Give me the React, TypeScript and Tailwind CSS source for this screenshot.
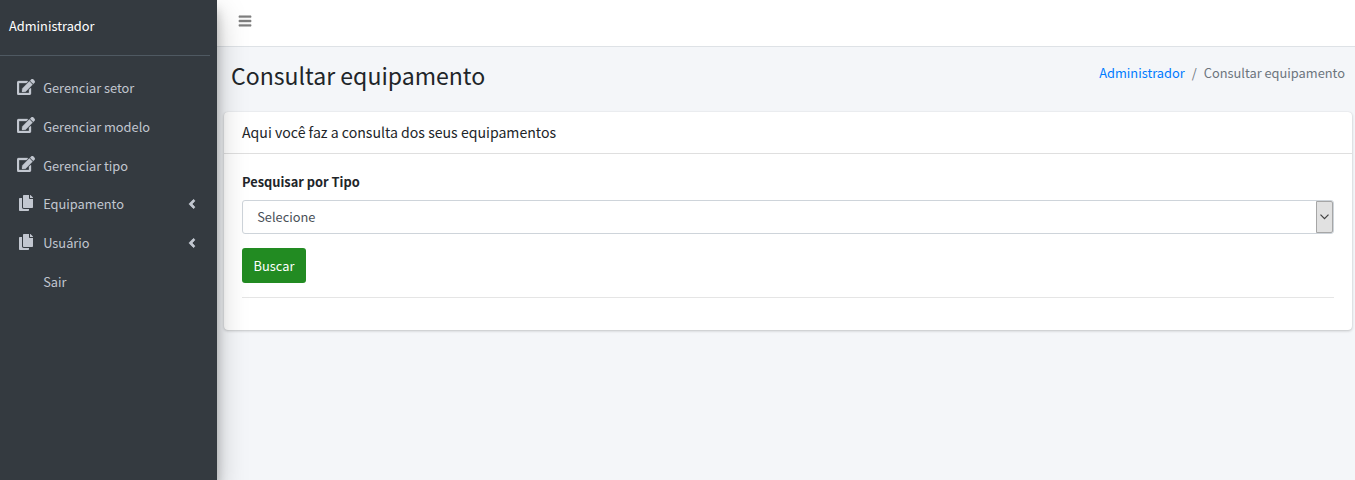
import { FaAngleLeft, FaBars, FaCopy, FaEdit } from "react-icons/fa";

const items = [
  { label: "Gerenciar setor", icon: "edit" },
  { label: "Gerenciar modelo", icon: "edit" },
  { label: "Gerenciar tipo", icon: "edit" },
  { label: "Equipamento", icon: "copy", tree: true },
  { label: "Usuário", icon: "copy", tree: true },
  { label: "Sair", icon: "" },
];

function Sidebar() {
  return (
    <aside className="relative z-10 h-[480px] w-[217px] shrink-0 bg-[#343a40] shadow-[0_14px_28px_rgba(0,0,0,0.25),0_10px_10px_rgba(0,0,0,0.22)]">
      <div className="mr-[7px] h-14 border-b border-[#4f5962] pt-[15px] pl-[9px] leading-[21px] text-white">
        Administrador
      </div>
      <nav className="flex flex-col pt-[12.2px]">
        {items.map((item) => (
          <a key={item.label} href="#" className="flex h-[38.75px] items-center pl-[15px] text-[#c2c7d0]">
            <span className="flex w-[22px] justify-center pb-[2px]">
              {item.icon === "edit" && <FaEdit className="h-4 w-[18px] stroke-current stroke-[10px]" />}
              {item.icon === "copy" && <FaCopy className="mr-px size-4" />}
            </span>
            <span className="ml-[6.2px] flex-1">{item.label}</span>
            {item.tree && <FaAngleLeft className="mr-[18px] size-[14px] stroke-current stroke-[28px]" />}
          </a>
        ))}
      </nav>
    </aside>
  );
}

export default function App() {
  return (
    <div className="flex h-[480px] overflow-hidden bg-[#f4f6f9] font-['Noto_Sans_CJK_SC',sans-serif] text-[12.82px] leading-[21px] text-[#212529]">
      <Sidebar />
      <div className="flex min-w-0 flex-1 flex-col">
        <header className="h-[47px] border-b border-[#dee2e6] bg-white pt-3.5 pl-[21px]">
          <FaBars className="size-[14px] stroke-current stroke-[16px] text-[#7f7f7f]" />
        </header>
        <div className="flex h-[65px] justify-between pt-3 pr-2.5 pl-3.5">
          <h1 className="text-[23.07px] leading-[32px]">Consultar equipamento</h1>
          <nav className="flex h-[27px] items-center gap-[7px] text-[#6c757d]">
            <a href="#" className="text-[#007bff]">Administrador</a>
            <span>/</span>
            <span>Consultar equipamento</span>
          </nav>
        </div>
        <main className="mr-[3px] ml-[7px] h-[218px] rounded-[4px] bg-white shadow-[0_0_1px_rgba(0,0,0,0.125),0_1px_3px_rgba(0,0,0,0.2)]">
          <h3 className="flex h-[42px] items-center border-b border-[#dfdfdf] pl-[18px] text-[14.12px]">
            Aqui você faz a consulta dos seus equipamentos
          </h3>
          <div className="pt-[17px] pr-[18px] pl-[18px]">
            <label className="block h-[29px] font-bold">Pesquisar por Tipo</label>
            <div className="flex h-[34px] items-stretch justify-between rounded-[3px] border border-[#ced4da] text-[#495057]">
              <span className="flex items-center pb-0.5 pl-[14.2px]">Selecione</span>
              <span className="flex w-[17px] items-center justify-center rounded-r-[2px] border border-[#a6a6a6] bg-[#e1e1e1]">
                <svg viewBox="0 0 9 6" className="h-[6px] w-[9px]" fill="none" stroke="#404040" strokeWidth="1.2">
                  <path d="M.5.7 4.5 4.7 8.5.7" />
                </svg>
              </span>
            </div>
            <button className="mt-3.5 flex h-[35px] w-16 items-center justify-center rounded-[3px] bg-[#228b22] text-white">
              Buscar
            </button>
            <hr className="mt-3.5 border-[#e5e5e5]" />
          </div>
        </main>
      </div>
    </div>
  );
}
